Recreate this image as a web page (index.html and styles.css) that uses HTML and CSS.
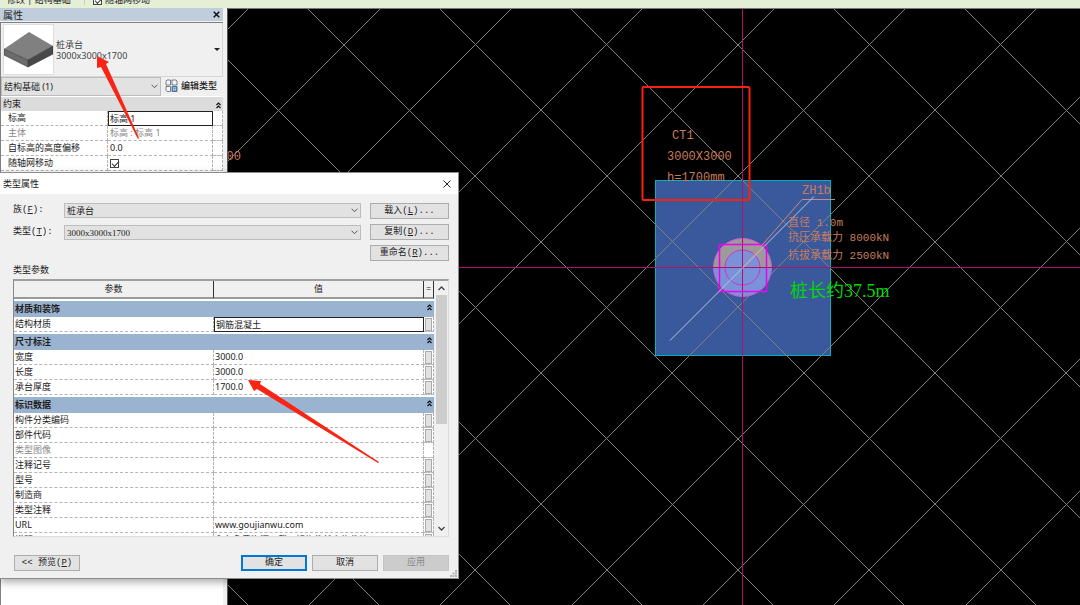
FILE: index.html
```html
<!DOCTYPE html>
<html lang="zh-CN">
<head>
<meta charset="utf-8">
<title>类型属性</title>
<link rel="stylesheet" href="styles.css">
</head>
<body>
<div class="app">
  <header class="ribbon">
    <span class="ribbon-context">修改 | 结构基础</span>
    <label class="ribbon-option"><input class="check" type="checkbox" checked>随轴网移动</label>
  </header>

  <main class="workspace">
    <aside class="palette">
      <div class="palette-title">
        <span>属性</span>
        <button class="icon-button" aria-label="关闭属性">
          <svg width="7" height="7" viewBox="0 0 7 7"><path d="M.7.7l5.600 5.600M6.300.7L.7 6.300" stroke="#111" stroke-width="1.500"/></svg>
        </button>
      </div>
      <div class="palette-body">
        <button class="type-selector">
          <svg class="thumb" width="49" height="49" viewBox="0 0 49 49">
            <path d="M0 24L25 7l24 14-25 14z" fill="#808080"/>
            <path d="M0 24l24 11v7L0 30z" fill="#6c6c6c"/>
            <path d="M24 35l25-14v8L24 42z" fill="#484848"/>
            <path d="M0 24l24 11 25-14M24 35v7M0 24v6l24 12 25-13v-8" fill="none" stroke="#333" stroke-width=".6"/>
          </svg>
          <span class="type-name">桩承台<br>3000x3000x1700</span>
          <svg width="6" height="3" viewBox="0 0 6 3"><path d="M0 0h6L3 3z" fill="#222"/></svg>
        </button>
        <div class="filter-row">
          <div class="combo filter-combo">
            <select aria-label="类别"><option>结构基础 (1)</option></select>
            <svg class="chevron" width="7" height="5" viewBox="0 0 7 5"><path d="M.5.7l3 3 3-3" fill="none" stroke="#555"/></svg>
          </div>
          <button class="edit-type">
            <svg width="13" height="13" viewBox="0 0 13 13" fill="#f5f7fa" stroke="#55606c" stroke-width=".8">
              <path d="M1 2l1-1h3.500v5H1zM7 1h4l1 1v4H7zM1 7.500h4.500v5H2l-1-1zM7 7.500h5v5H7z"/>
              <path d="M7.500 8h4v4h-4z" fill="#dcebfa" stroke="#2c6cb0"/><path d="M8.500 9.500h2M8.500 11h2" stroke="#2c6cb0"/>
            </svg>
            编辑类型
          </button>
        </div>
        <table class="props">
          <colgroup><col class="prop-name"><col><col class="prop-tail"></colgroup>
          <thead><tr><th colspan="2" scope="colgroup">约束</th><th><svg class="fold" width="5" height="7" viewBox="0 0 5 7"><path d="M.5 3l2-2 2 2M.5 6l2-2 2 2"/></svg></th></tr></thead>
          <tbody>
            <tr><th scope="row">标高</th><td class="editing">标高 1</td><td></td></tr>
            <tr class="disabled"><th scope="row">主体</th><td>标高 : 标高 1</td><td></td></tr>
            <tr><th scope="row">自标高的高度偏移</th><td>0.0</td><td></td></tr>
            <tr><th scope="row"><label for="follow-grid">随轴网移动</label></th><td><input id="follow-grid" class="check" type="checkbox" checked></td><td></td></tr>
          </tbody>
        </table>
      </div>
    </aside>

    <section class="canvas" aria-label="平面视图">
      <svg class="drawing" width="100%" height="100%">
        <g transform="translate(-228 -9)">
          <rect x="655.5" y="180.500" width="175" height="175" fill="#3a589c" stroke="#00b4be"/>
          <path class="grid" d="M257 0l-605 605M389 0l-605 605M520 0l-605 605M651 0l-605 605M783 0l-605 605M914 0l-605 605M1045 0l-605 605M1177 0l-605 605M1308 0l-605 605M1439 0l-605 605M1571 0l-605 605M1702 0l-605 605M-357 0l605 605M-226 0l605 605M-95 0l605 605M37 0l605 605M168 0l605 605M299 0l605 605M431 0l605 605M562 0l605 605M693 0l605 605M825 0l605 605M956 0l605 605"/>
          <circle cx="742.500" cy="267.500" r="29" fill="#7a93d8"/>
          <path d="M713.500 267.500a29 29 0 0 1 58 0z" fill="#9c9a9b"/>
          <circle cx="742.500" cy="267.500" r="17.500" fill="#7a93d8"/>
          <g fill="none" stroke="#f000f0">
            <circle cx="742.500" cy="267.500" r="29" stroke="#d65ad6"/>
            <circle cx="742.500" cy="267.500" r="17.500" stroke="#d828d8"/>
            <path d="M719.500 244.500h47v47h-47z" stroke-width="1.500"/>
          </g>
          <path d="M742.500 8v597M228 267.500h852" stroke="#b0106a"/>
          <path d="M743 267l59-67.500h33" fill="none" stroke="#c98a7c"/>
          <path d="M670 340.500L814 196.500" stroke="#bcc4dc"/>
          <g class="cad">
            <text x="241" y="160" text-anchor="end">3000X3000</text>
            <text x="672" y="139">CT1</text>
            <text x="667" y="160">3000X3000</text>
            <text x="667" y="181">h=1700mm</text>
            <text x="802" y="194">ZH1b</text>
            <g class="cad-note">
              <text x="788" y="226">直径 1.0m</text>
              <text x="788" y="241">抗压承载力 8000kN</text>
              <text x="788" y="259">抗拔承载力 2500kN</text>
            </g>
            <text class="cad-length" x="790" y="297">桩长约37.5m</text>
          </g>
          <rect x="642.500" y="87" width="107" height="113" rx="1" fill="none" stroke="#f8200f" stroke-width="2"/>
        </g>
      </svg>
    </section>
  </main>

  <div class="dialog" role="dialog" aria-labelledby="dialog-title">
    <div class="dialog-title">
      <span id="dialog-title">类型属性</span>
      <button class="icon-button" aria-label="关闭">
        <svg width="8" height="8" viewBox="0 0 8 8"><path d="M.5.5l7 7M7.500.5l-7 7" stroke="#222"/></svg>
      </button>
    </div>
    <div class="dialog-body">
      <div class="dialog-top">
        <div class="fields">
          <label for="family">族(<u>F</u>):</label>
          <div class="combo">
            <select id="family"><option>桩承台</option></select>
            <svg class="chevron" width="7" height="5" viewBox="0 0 7 5"><path d="M.5.7l3 3 3-3" fill="none" stroke="#555"/></svg>
          </div>
          <label for="type">类型(<u>T</u>):</label>
          <div class="combo">
            <select id="type"><option>3000x3000x1700</option></select>
            <svg class="chevron" width="7" height="5" viewBox="0 0 7 5"><path d="M.5.7l3 3 3-3" fill="none" stroke="#555"/></svg>
          </div>
        </div>
        <div class="side-buttons">
          <button class="btn">载入(<u>L</u>)...</button>
          <button class="btn">复制(<u>D</u>)...</button>
          <button class="btn">重命名(<u>R</u>)...</button>
        </div>
      </div>

      <div class="params-label" id="params-label">类型参数</div>
      <div class="params-box">
        <div class="params-view">
          <table class="params" aria-labelledby="params-label">
            <colgroup><col class="param-name"><col><col class="param-tail"></colgroup>
            <thead><tr><th>参数</th><th>值</th><th>=</th></tr></thead>
            <tbody>
              <tr class="group"><th colspan="2">材质和装饰</th><th><svg class="fold" width="5" height="7" viewBox="0 0 5 7"><path d="M.5 3l2-2 2 2M.5 6l2-2 2 2"/></svg></th></tr>
              <tr><td>结构材质</td><td class="editing">钢筋混凝土</td><td><button class="mini" aria-label="结构材质"></button></td></tr>
              <tr class="group"><th colspan="2">尺寸标注</th><th><svg class="fold" width="5" height="7" viewBox="0 0 5 7"><path d="M.5 3l2-2 2 2M.5 6l2-2 2 2"/></svg></th></tr>
              <tr><td>宽度</td><td>3000.0</td><td><button class="mini" aria-label="宽度"></button></td></tr>
              <tr><td>长度</td><td>3000.0</td><td><button class="mini" aria-label="长度"></button></td></tr>
              <tr><td>承台厚度</td><td>1700.0</td><td><button class="mini" aria-label="承台厚度"></button></td></tr>
              <tr class="group"><th colspan="2">标识数据</th><th><svg class="fold" width="5" height="7" viewBox="0 0 5 7"><path d="M.5 3l2-2 2 2M.5 6l2-2 2 2"/></svg></th></tr>
              <tr><td>构件分类编码</td><td></td><td><button class="mini" aria-label="构件分类编码"></button></td></tr>
              <tr><td>部件代码</td><td></td><td><button class="mini" aria-label="部件代码"></button></td></tr>
              <tr class="disabled"><td>类型图像</td><td></td><td></td></tr>
              <tr><td>注释记号</td><td></td><td><button class="mini" aria-label="注释记号"></button></td></tr>
              <tr><td>型号</td><td></td><td><button class="mini" aria-label="型号"></button></td></tr>
              <tr><td>制造商</td><td></td><td><button class="mini" aria-label="制造商"></button></td></tr>
              <tr><td>类型注释</td><td></td><td><button class="mini" aria-label="类型注释"></button></td></tr>
              <tr><td>URL</td><td>www.goujianwu.com</td><td><button class="mini" aria-label="URL"></button></td></tr>
              <tr><td>说明</td><td>永久免费资源下载，好构件就上构件坞</td><td><button class="mini" aria-label="说明"></button></td></tr>
            </tbody>
          </table>
        </div>
        <div class="scrollbar" aria-hidden="true">
          <svg width="7" height="5" viewBox="0 0 7 5"><path d="M.5 4l3-3 3 3" fill="none" stroke="#444" stroke-width="1.300"/></svg>
          <div class="track"><div class="thumb-bar"></div></div>
          <svg width="7" height="5" viewBox="0 0 7 5"><path d="M.5 1l3 3 3-3" fill="none" stroke="#444" stroke-width="1.300"/></svg>
        </div>
      </div>

      <div class="dialog-footer">
        <button class="btn preview">&lt;&lt; 预览(<u>P</u>)</button>
        <button class="btn primary">确定</button>
        <button class="btn">取消</button>
        <button class="btn" disabled>应用</button>
      </div>
    </div>
    <svg class="grip" width="7" height="7" viewBox="0 0 7 7" fill="#b4b4b4"><path d="M5 0h2v2H5zM5 2.500h2v2H5zM2.500 2.500h2v2h-2zM5 5h2v2H5zM2.500 5h2v2h-2zM0 5h2v2H0z"/></svg>
  </div>

  <svg class="markup" width="100%" height="100%" fill="#fa2414" aria-hidden="true">
    <path d="M97 56l12 6-3 2 33 74-1 1-37-72-4 1z"/>
    <path d="M248 380l13 1-1 3 119 78-1 1-121-74-3 2z"/>
  </svg>
</div>
</body>
</html>
```
FILE: styles.css
```css
* { box-sizing: border-box; }

body {
  margin: 0;
  font: 9px/12px "Noto Sans", "Noto Sans CJK SC", sans-serif;
  color: #222;
}

button, select, input { font: inherit; color: inherit; margin: 0; border-radius: 0; }
button { padding: 0; white-space: nowrap; }
svg { display: block; flex: none; }
table { width: 100%; border-collapse: separate; border-spacing: 0; table-layout: fixed; }
th, td { padding: 0; text-align: left; font-weight: 400; overflow: hidden; white-space: nowrap; }

.app {
  position: relative;
  display: flex;
  flex-direction: column;
  height: 100vh;
  overflow: hidden;
}

/* Ribbon */
.ribbon {
  display: flex;
  flex: none;
  align-items: flex-end;
  height: 8px;
  padding: 0 7px 3px;
  overflow: hidden;
  background: #e5efd5;
  line-height: 10px;
}
.ribbon-context { width: 78px; border-right: 1px solid #c4ceb8; }
.ribbon-option { display: flex; align-items: flex-end; gap: 3px; padding-left: 8px; }

.check {
  appearance: none;
  display: block;
  width: 9px;
  height: 9px;
  border: 1px solid #444;
  background: #fff;
}
.check:checked::after {
  content: "";
  display: block;
  width: 6px;
  height: 3px;
  margin: 1px 0 0 1px;
  border: solid #333;
  border-width: 0 0 1px 1px;
  transform: rotate(-45deg);
}

.workspace { display: flex; flex: 1; min-height: 0; }

/* Properties palette */
.palette {
  display: flex;
  flex: none;
  flex-direction: column;
  width: 228px;
  padding-right: 4px;
  background: #f0f0f0;
  border-right: 1px solid #555;
}
.palette-title {
  display: flex;
  align-items: center;
  justify-content: space-between;
  height: 13px;
  padding: 0 3px;
  background: #bfcddc;
  font-size: 10px;
}
.icon-button { border: 0; background: none; }
.palette-body {
  flex: 1;
  margin-top: 1px;
  border: solid #808080;
  border-width: 1px 0 0 1px;
  background: #fff;
}
.type-selector {
  display: flex;
  align-items: center;
  gap: 3px;
  width: 100%;
  height: 54px;
  padding: 0 2px 0 3px;
  border: 1px solid #d6d6d6;
  border-width: 0 1px 1px 0;
  background: #f0f0f0;
  text-align: left;
}
.thumb { background: #fff; outline: 1px solid #ddd; }
.type-name { flex: 1; line-height: 11px; color: #444; }

.filter-row { display: flex; height: 19px; background: #f0f0f0; }
.filter-combo { width: 160px; }
.edit-type {
  display: flex;
  flex: 1;
  align-items: center;
  gap: 3px;
  padding: 0 0 2px 4px;
  border: 0;
  background: none;
  font-weight: 500;
}

.combo { display: grid; align-items: stretch; }
.combo > * { grid-area: 1 / 1; }
.combo select {
  appearance: none;
  width: 100%;
  padding: 0 2px;
  border: 1px solid #bdbdbd;
  background: #e2e2e2;
  line-height: 12px;
}
.combo .chevron { align-self: center; justify-self: end; margin-right: 3px; pointer-events: none; }

.fold { margin: auto; fill: none; stroke: #111; stroke-width: 1.2; }

.prop-name { width: 107px; }
.prop-tail { width: 10px; }
.props { margin-top: 1px; }
.props thead th { height: 14px; background: #dcdcdc; }
.props thead th:first-child { padding-left: 2px; }
.props thead .fold { margin-top: 2px; }
.props tbody th { padding-left: 7px; }
.props tbody th, .props tbody td {
  height: 15px;
  border: dashed #b4b4b4;
  border-width: 0 1px 1px 0;
  line-height: 12px;
}
.props tbody td { padding-left: 2px; }
.props tbody td.editing, .params tbody td.editing { border: 1px solid #222; padding-left: 1px; }
.disabled { color: #888; }

/* Drawing view */
.canvas { flex: 1; min-width: 0; background: #000; border-top: 1px solid #777; }
.grid { stroke: #808080; fill: none; }
.cad { font: 12px "Liberation Mono", "Noto Sans CJK SC", monospace; fill: #c87c5c; }
.cad-note { font-size: 11px; }
.cad-length { font: 18px "Liberation Serif", "Noto Sans CJK SC", serif; fill: #00d800; }

/* Type properties dialog */
.dialog {
  position: absolute;
  top: 172px;
  left: 0;
  width: 459px;
  border: solid #8c8c8c;
  border-width: 1px 1px 1px 0;
  background: #f0f0f0;
  box-shadow: 0 3px 8px rgba(0, 0, 0, .35);
}
.dialog-title {
  display: flex;
  align-items: center;
  justify-content: space-between;
  height: 21px;
  padding: 0 7px 0 3px;
  background: #fff;
}
.dialog-body { padding: 9px 9px 7px 13px; }
.dialog-top { display: flex; gap: 9px; }
.fields {
  display: grid;
  flex: 1;
  grid-template-columns: 51px 1fr;
  grid-auto-rows: 15px;
  align-content: start;
  align-items: stretch;
  row-gap: 7px;
}
.fields label { line-height: 14px; }
.fields label, .btn { font-family: "Liberation Mono", "Noto Sans CJK SC", monospace; }
.fields select { font-family: "Liberation Serif", "Noto Sans CJK SC", serif; }
.side-buttons { display: grid; width: 79px; grid-auto-rows: 16px; row-gap: 5px; }
.btn {
  height: 16px;
  border: 1px solid #adadad;
  background: #e2e2e2;
  line-height: 12px;
}
.params-label { margin: 3px 0; }

.params-box {
  display: flex;
  height: 258px;
  border: 1px solid #dcdcdc;
  border-top: 2px solid #a0a0a0;
  border-left-color: #888;
  background: #fff;
}
.params-view { flex: 1; min-width: 0; overflow: hidden; }
.param-name { width: 200px; }
.param-tail { width: 10px; }
.params thead th {
  height: 18px;
  border-right: 1px solid #333;
  border-bottom: 2px solid #999;
  background: #f0f0f0;
  text-align: center;
}
.params .group th {
  height: 18px;
  padding-left: 1px;
  border-top: 2px solid #fff;
  background: #9ab3d1;
  background-clip: padding-box;
  font-weight: 700;
}
.params .group th:last-child { padding: 0 0 3px; }
.params tbody td {
  height: 15px;
  padding-left: 1px;
  border: dashed #b4b4b4;
  border-width: 0 1px 1px 0;
  line-height: 12px;
}
.mini {
  display: block;
  width: 7px;
  height: 13px;
  border: 1px solid #aaa;
  background: #e2e2e2;
}

.scrollbar {
  display: flex;
  flex-direction: column;
  align-items: center;
  gap: 4px;
  width: 14px;
  padding: 5px 1px;
  background: #f0f0f0;
}
.track { flex: 1; width: 11px; }
.thumb-bar { height: 57%; background: #cdcdcd; }

.dialog-footer {
  display: flex;
  gap: 5px;
  margin-top: 18px;
}
.dialog-footer .btn { width: 66px; }
.dialog-footer .preview { margin: 0 auto 0 1px; }
.dialog-footer .primary { border: 2px solid #0078d7; }
.btn:disabled { border-color: #c4c4c4; background: #cccccc; color: #888; }
.grip { position: absolute; right: 1px; bottom: 1px; }

/* Arrows drawn over the windows */
.markup { position: absolute; inset: 0; pointer-events: none; }
```
